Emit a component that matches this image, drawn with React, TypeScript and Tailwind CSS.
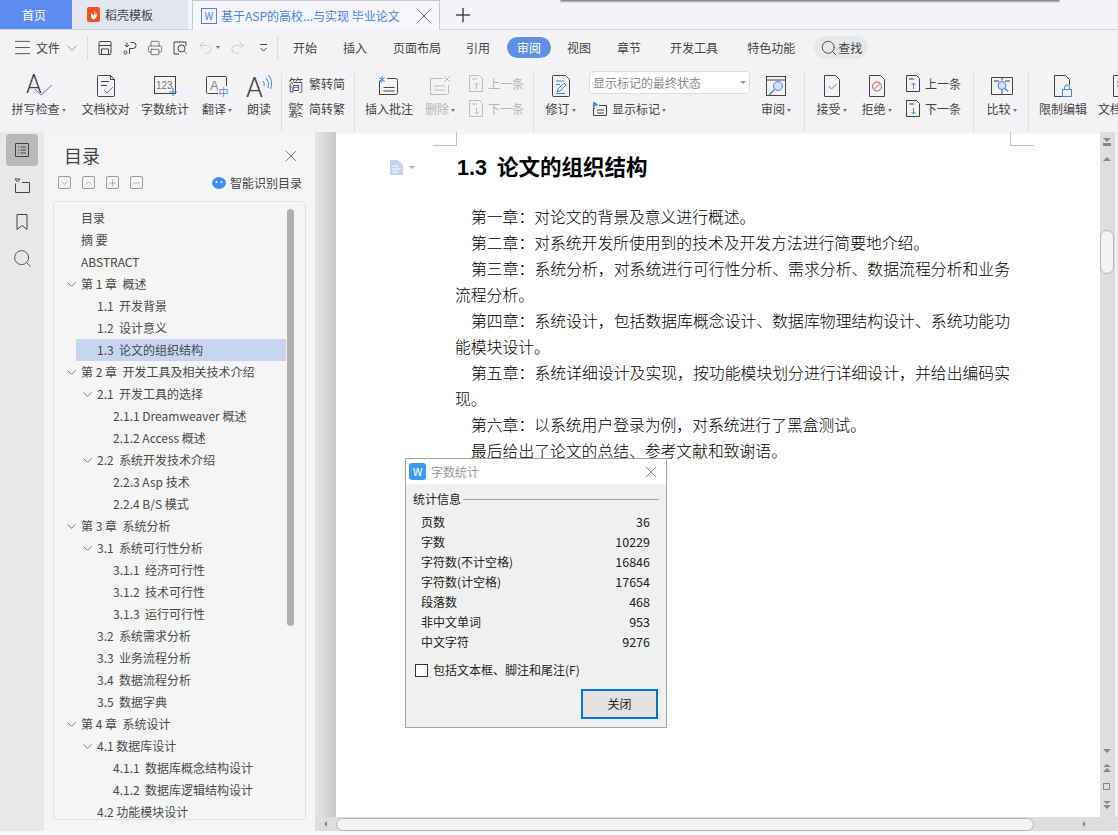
import React from 'react';
import { ChevronDown, ChevronUp, Menu, Minus, Plus, Printer, Redo2, Search, Undo2, X } from 'lucide-react';

const BLUE = '#4a86e8';
const INK = '#444444';
const OFF = '#bdbdbd';

const Svg = ({ w = 24, h = 24, children }: { w?: number; h?: number; children: React.ReactNode }) => (
  <svg className="overflow-visible" width={w} height={h} viewBox={`0 0 ${w} ${h}`} fill="none" strokeWidth="1">
    {children}
  </svg>
);

const Caret = () => <span className="ml-[2px] inline-block h-0 w-0 border-x-[2.5px] border-t-[3px] border-x-transparent border-t-[#777777] align-middle" />;

const RibbonItem = ({ label, caret, off, className, children }: { label: string; caret?: boolean; off?: boolean; className: string; children: React.ReactNode }) => (
  <div className={`flex shrink-0 flex-col items-center ${className}`}>
    <div className="flex h-[30px] items-center justify-center">{children}</div>
    <div className={`h-[16px] whitespace-nowrap text-[12px] leading-[16px] ${off ? 'text-[#b5b5b5]' : 'text-[#444444]'}`}>
      {label}
      {caret && <Caret />}
    </div>
  </div>
);

const Sep = ({ className }: { className: string }) => <div className={`mt-[2px] h-[60px] w-px shrink-0 bg-[#e0e0e0] ${className}`} />;

const SmallRow = ({ icon, label, off }: { icon: React.ReactNode; label: string; off?: boolean }) => (
  <div className={`flex h-[25px] items-center gap-[3px] whitespace-nowrap text-[12px] ${off ? 'text-[#b5b5b5]' : 'text-[#444444]'}`}>
    {icon}
    {label}
  </div>
);

const ConvertIcon = ({ ch }: { ch: string }) => (
  <span className="relative inline-block h-[20px] w-[18px] text-[16px] font-light leading-[20px] text-[#333333]">
    {ch}
    <svg className="absolute bottom-0 left-0" width="6" height="8" viewBox="0 0 6 8" fill="none" stroke={BLUE}>
      <path d="M1 0.5C4 0.5 5 2 4.5 6M2.5 4.5l2 2 1-2" />
    </svg>
  </span>
);

const PageArrow = ({ up, off }: { up?: boolean; off?: boolean }) => {
  const c = off ? OFF : INK;
  return (
    <Svg w={17} h={19}>
      <path d="M1.5 1.5h10l3 3v13h-13z" stroke={c} />
      <path d="M4 5h5" stroke={c} />
      {up ? <path d="M8.5 15V9M6.5 11l2-2 2 2" stroke={off ? OFF : BLUE} /> : <path d="M8.5 9v6M6.5 13l2 2 2-2" stroke={off ? OFF : BLUE} />}
    </Svg>
  );
};

const tree: { t: string; lv: number; open?: boolean; on?: boolean }[] = [
  { t: '目录', lv: 0 },
  { t: '摘 要', lv: 0 },
  { t: 'ABSTRACT', lv: 0 },
  { t: '第 1 章  概述', lv: 0, open: true },
  { t: '1.1  开发背景', lv: 1 },
  { t: '1.2  设计意义', lv: 1 },
  { t: '1.3  论文的组织结构', lv: 1, on: true },
  { t: '第 2 章  开发工具及相关技术介绍', lv: 0, open: true },
  { t: '2.1  开发工具的选择', lv: 1, open: true },
  { t: '2.1.1 Dreamweaver 概述', lv: 2 },
  { t: '2.1.2 Access 概述', lv: 2 },
  { t: '2.2  系统开发技术介绍', lv: 1, open: true },
  { t: '2.2.3 Asp 技术', lv: 2 },
  { t: '2.2.4 B/S 模式', lv: 2 },
  { t: '第 3 章  系统分析', lv: 0, open: true },
  { t: '3.1  系统可行性分析', lv: 1, open: true },
  { t: '3.1.1  经济可行性', lv: 2 },
  { t: '3.1.2  技术可行性', lv: 2 },
  { t: '3.1.3  运行可行性', lv: 2 },
  { t: '3.2  系统需求分析', lv: 1 },
  { t: '3.3  业务流程分析', lv: 1 },
  { t: '3.4  数据流程分析', lv: 1 },
  { t: '3.5  数据字典', lv: 1 },
  { t: '第 4 章  系统设计', lv: 0, open: true },
  { t: '4.1 数据库设计', lv: 1, open: true },
  { t: '4.1.1  数据库概念结构设计', lv: 2 },
  { t: '4.1.2  数据库逻辑结构设计', lv: 2 },
  { t: '4.2 功能模块设计', lv: 1 },
];

const stats = [
  ['页数', '36'],
  ['字数', '10229'],
  ['字符数(不计空格)', '16846'],
  ['字符数(计空格)', '17654'],
  ['段落数', '468'],
  ['非中文单词', '953'],
  ['中文字符', '9276'],
];

const paragraphs = [
  '第一章：对论文的背景及意义进行概述。',
  '第二章：对系统开发所使用到的技术及开发方法进行简要地介绍。',
  '第三章：系统分析，对系统进行可行性分析、需求分析、数据流程分析和业务流程分析。',
  '第四章：系统设计，包括数据库概念设计、数据库物理结构设计、系统功能功能模块设计。',
  '第五章：系统详细设计及实现，按功能模块划分进行详细设计，并给出编码实现。',
  '第六章：以系统用户登录为例，对系统进行了黑盒测试。',
  '最后给出了论文的总结、参考文献和致谢语。',
];

const TreeButton = ({ children }: { children: React.ReactNode }) => (
  <div className="flex h-[13px] w-[13px] items-center justify-center rounded-[2px] border border-[#9a9a9a] text-[#666666]">{children}</div>
);

export default function App() {
  return (
    <div
      className="relative flex h-[835px] w-[1118px] flex-col overflow-hidden bg-[#f3f3f5] text-[#444444]"
      style={{ fontFamily: '"Noto Sans CJK SC", "Noto Sans", sans-serif' }}
    >
      {/* tabs */}
      <div className="flex h-[30px] shrink-0 border-b border-[#d2d4e0] bg-[#f3f4f8] text-[12px]">
        <div className="flex w-[72px] items-center pl-[22px] bg-[#5e8df0] text-white">首页</div>
        <div className="flex w-[116px] items-center gap-[5px] bg-[#e3e6ee] pl-[15px] text-[#444444]">
          <span className="flex h-[15px] w-[13px] items-center justify-center rounded-[2px] bg-[#f4511e]">
            <svg width="9" height="11" viewBox="0 0 9 11" fill="#ffffff">
              <path d="M5.5 0.5C6.5 3 5 5 4.5 6.5 4 5.500 3 5 2.500 4 1.500 6 2 9.500 4 10.500 7 10 8.500 7 7.500 4 7 5 6.500 5.500 6 5.500 6.500 3.500 6.500 2 5.500 0.500z" />
            </svg>
          </span>
          稻壳模板
        </div>
        <div className="ml-[4px] flex h-[30px] w-[248px] items-center border-x border-t border-[#c5c8d6] bg-[#f6f7fa] pl-[8px] text-[#4a86e8]">
          <span className="mr-[4px] flex h-[16px] w-[16px] shrink-0 items-center justify-center border border-[#4a86e8] text-[10px] leading-none">W</span>
          <span className="whitespace-nowrap">基于ASP的高校...与实现 毕业论文</span>
          <X size={22} strokeWidth={1} className="ml-auto mr-[4px] text-[#555555]" />
        </div>
        <Plus size={22} strokeWidth={1.6} className="ml-[12px] mt-[4px] text-[#444444]" />
      </div>
      <div className="absolute left-[560px] top-0 h-[3px] w-[500px] rounded-full bg-gradient-to-b from-[#777777] to-transparent" />

      {/* menu row */}
      <div className="flex h-[35px] shrink-0 items-center text-[12px] text-[#444444]">
        <Menu size={21} strokeWidth={1} className="ml-[12px]" />
        <span className="ml-[3px]">文件</span>
        <ChevronDown size={18} strokeWidth={1} className="ml-[3px] text-[#777777]" />
        <div className="ml-[6px] h-[24px] w-px bg-[#dcdcdc]" />
        <div className="ml-[9px] flex items-center gap-[9px]">
          <Svg w={16} h={16}>
            <path d="M2 2.500a1 1 0 0 1 1-1h10a1 1 0 0 1 1 1v11a1 1 0 0 1-1 1H3a1 1 0 0 1-1-1zM2 5.500h12M4.500 14.500V9h7v5.500" stroke={INK} />
          </Svg>
          <Svg w={16} h={16}>
            <path d="M8.500 2.500h2.500a3 3 0 0 1 0 6H7.500v5.500" stroke={INK} />
            <path d="M3 5l2 2 2-2M5 2.500V7" stroke={INK} />
            <circle cx="3.500" cy="12.500" r="1.500" stroke={INK} />
          </Svg>
          <Printer size={16} strokeWidth={1} />
          <Svg w={16} h={16}>
            <path d="M14 6V2H2v12h5" stroke={INK} />
            <circle cx="9.500" cy="8.500" r="3.500" stroke={INK} />
            <path d="M12 11l3 3" stroke={BLUE} />
          </Svg>
          <span className="flex items-center text-[#bdbdbd]">
            <Undo2 size={17} strokeWidth={1} />
            <Caret />
          </span>
          <Redo2 size={17} strokeWidth={1} className="text-[#bdbdbd]" />
          <span className="ml-[3px] flex">
            <Svg w={11} h={12}>
              <path d="M2 2.500h7M2.500 6l3 3 3-3" stroke={INK} />
            </Svg>
          </span>
        </div>
        <div className="ml-[8px] h-[24px] w-px bg-[#dcdcdc]" />
        <span className="ml-[15px]">开始</span>
        <span className="ml-[26px]">插入</span>
        <span className="ml-[26px]">页面布局</span>
        <span className="ml-[25px]">引用</span>
        <span className="ml-[17px] flex h-[21px] w-[44px] items-center justify-center rounded-full bg-[#5f8fe6] text-white">审阅</span>
        <span className="ml-[16px]">视图</span>
        <span className="ml-[26px]">章节</span>
        <span className="ml-[29px]">开发工具</span>
        <span className="ml-[29px]">特色功能</span>
        <span className="ml-[19px] flex h-[23px] w-[54px] items-center justify-center rounded-full bg-[#e6e8ea]">
          <Search size={18} strokeWidth={1.2} />
          查找
        </span>
      </div>

      {/* ribbon */}
      <div className="flex h-[67px] shrink-0 overflow-hidden pt-[6px]">
        <RibbonItem label="拼写检查" caret className="ml-[12px] w-[53px]">
          <Svg w={28} h={28}>
            <text x="1" y="21" fontSize="25" fontWeight="300" fill={INK} fontFamily="Roboto">A</text>
            <path d="M10 17l6 6L27 13" stroke={BLUE} />
          </Svg>
        </RibbonItem>
        <RibbonItem label="文档校对" className="ml-[16px] w-[49px]">
          <Svg w={20} h={24}>
            <path d="M1.500 2.500a1 1 0 0 1 1-1h12l4 4v16a1 1 0 0 1-1 1h-15a1 1 0 0 1-1-1z" stroke={INK} />
            <path d="M14.500 1.500l4 4h-4zM5 7.500h8M5 11.500h6" stroke={INK} />
            <path d="M8 16l3 3 6-6" stroke={BLUE} />
          </Svg>
        </RibbonItem>
        <RibbonItem label="字数统计" className="ml-[11px] w-[48px]">
          <Svg w={25} h={22}>
            <rect x="1.500" y="1.500" width="21" height="17" stroke={INK} />
            <text x="3" y="14" fontSize="10" fill="#777777" fontFamily="Liberation Sans">123</text>
            <path d="M20 13v8M16 17h8" stroke={BLUE} strokeWidth="1.200" />
          </Svg>
        </RibbonItem>
        <RibbonItem label="翻译" caret className="ml-[12px] w-[32px]">
          <Svg w={24} h={22}>
            <rect x="1.500" y="1.500" width="20" height="17" rx="1" stroke={INK} />
            <text x="5" y="15" fontSize="13" fill="#888888" fontFamily="Liberation Sans">A</text>
            <rect x="13" y="11" width="11" height="11" fill="#f3f3f5" />
            <text x="13.500" y="20.500" fontSize="10" fill={BLUE}>中</text>
          </Svg>
        </RibbonItem>
        <RibbonItem label="朗读" className="ml-[14px] w-[24px]">
          <Svg w={26} h={26}>
            <text x="0" y="24" fontSize="27" fontWeight="300" fill={INK} fontFamily="Roboto">A</text>
            <path d="M17 8q2 2 1 5M20 5q4 4 2 10M22.500 2q5 6 2 14" stroke={BLUE} />
          </Svg>
        </RibbonItem>
        <Sep className="ml-[10px]" />
        <div className="ml-[6px] flex w-[66px] shrink-0 flex-col">
          <SmallRow icon={<ConvertIcon ch="简" />} label="繁转简" />
          <SmallRow icon={<ConvertIcon ch="繁" />} label="简转繁" />
        </div>
        <Sep className="" />
        <RibbonItem label="插入批注" className="ml-[10px] w-[48px]">
          <Svg w={24} h={22}>
            <path d="M4 6H2.500v13.500h16a2 2 0 0 0 2-2V5.500a2 2 0 0 0-2-2H10M6.500 12.500h11M6.500 16h11" stroke={INK} />
            <path d="M5 1v7M2 2.500l6 4M8 2.500l-6 4" stroke={BLUE} />
          </Svg>
        </RibbonItem>
        <RibbonItem label="删除" caret off className="ml-[11px] w-[32px]">
          <Svg w={24} h={22}>
            <path d="M15 3.500H2.500v16h16a2 2 0 0 0 2-2V10M6 11h11M6 15h11M16 1l6 6M22 1l-6 6" stroke={OFF} />
          </Svg>
        </RibbonItem>
        <div className="ml-[12px] flex w-[65px] shrink-0 flex-col">
          <SmallRow icon={<PageArrow up off />} label="上一条" off />
          <SmallRow icon={<PageArrow off />} label="下一条" off />
        </div>
        <Sep className="" />
        <RibbonItem label="修订" caret className="ml-[10px] w-[33px]">
          <Svg w={20} h={24}>
            <path d="M1.500 2.500a1 1 0 0 1 1-1h12l4 4v16a1 1 0 0 1-1 1h-15a1 1 0 0 1-1-1z" stroke={INK} />
            <path d="M5 7h8M5 10.500h4M6 18l1-3 6-6 2 2-6 6zM5 19.500h9" stroke={BLUE} />
          </Svg>
        </RibbonItem>
        <div className="ml-[12px] flex w-[161px] shrink-0 flex-col">
          <div className="flex h-[23px] items-center justify-between rounded-[4px] border border-[#dddddd] bg-white px-[3px] text-[12px] text-[#8a8a8a]">
            显示标记的最终状态
            <span className="h-0 w-0 border-x-[3px] border-t-[3px] border-x-transparent border-t-[#999999]" />
          </div>
          <div className="mt-[2px] flex h-[25px] items-center gap-[4px] pl-[3px] text-[12px]">
            <Svg w={16} h={16}>
              <path d="M3 7H1.500v7.500h13V4.500H7M5 9h7M5 12h7" stroke={INK} />
              <path d="M1.500 1v5l4-2.500z" fill={BLUE} stroke={BLUE} />
            </Svg>
            <span>
              显示标记
              <Caret />
            </span>
          </div>
        </div>
        <RibbonItem label="审阅" caret className="ml-[9px] w-[34px]">
          <Svg w={22} h={22}>
            <rect x="1.500" y="1.500" width="19" height="19" stroke={INK} />
            <path d="M1.500 5h19" stroke={INK} />
            <circle cx="13" cy="11" r="4.500" fill="#cfdff8" stroke={BLUE} />
            <path d="M9.500 14.500L4 20" stroke={BLUE} strokeWidth="1.500" />
          </Svg>
        </RibbonItem>
        <Sep className="ml-[11px]" />
        <RibbonItem label="接受" caret className="ml-[10px] w-[33px]">
          <Svg w={18} h={24}>
            <path d="M1.500 1.500h11l4 4v17h-15z" stroke={INK} />
            <path d="M5.500 12l3 3 5-5" stroke={BLUE} />
          </Svg>
        </RibbonItem>
        <RibbonItem label="拒绝" caret className="ml-[12px] w-[33px]">
          <Svg w={18} h={24}>
            <path d="M1.500 1.500h11l4 4v17h-15z" stroke={INK} />
            <circle cx="9" cy="12.500" r="4.500" stroke="#d9534f" />
            <path d="M6 15.500l6-6" stroke="#d9534f" />
          </Svg>
        </RibbonItem>
        <div className="ml-[12px] flex w-[62px] shrink-0 flex-col">
          <SmallRow icon={<PageArrow up />} label="上一条" />
          <SmallRow icon={<PageArrow />} label="下一条" />
        </div>
        <Sep className="ml-[6px]" />
        <RibbonItem label="比较" caret className="ml-[11px] w-[33px]">
          <Svg w={24} h={22}>
            <path d="M12 2.500H1.500v17h21v-17zM12 2.500v3M12 15v4.500M4 6h5M15 6h5" stroke={INK} />
            <circle cx="12" cy="10.500" r="4" fill="#cfdff8" stroke={BLUE} />
            <path d="M15 13.500l3 3" stroke={BLUE} strokeWidth="1.500" />
          </Svg>
        </RibbonItem>
        <Sep className="ml-[10px]" />
        <RibbonItem label="限制编辑" className="ml-[10px] w-[48px]">
          <Svg w={20} h={24}>
            <path d="M9 22.500H1.500v-21h11l4 4V11" stroke={INK} />
            <rect x="9.500" y="15.500" width="9" height="7" stroke={BLUE} />
            <path d="M11.500 15.500v-2a2.500 2.500 0 0 1 5 0v2" stroke={BLUE} />
          </Svg>
        </RibbonItem>
        <RibbonItem label="文档权限" className="ml-[11px] w-[48px]">
          <Svg w={20} h={24}>
            <path d="M1.500 1.500h11l4 4v17h-15zM5 8h8M5 12h8" stroke={INK} />
          </Svg>
        </RibbonItem>
      </div>

      {/* body */}
      <div className="flex h-[699px] shrink-0">
        <div className="flex w-[44px] shrink-0 flex-col items-center gap-[4px] bg-[#e8e8e8] pt-[2px]">
          <div className="flex h-[32px] w-[32px] items-center justify-center rounded-[4px] bg-[#b9b9b9]">
            <Svg w={14} h={14}>
              <path d="M0.500 0.500h13v13h-13zM3 4h1M5.500 4H11M3 7h1M5.500 7H11M3 10h1M5.500 10H11" stroke={INK} />
            </Svg>
          </div>
          <div className="flex h-[32px] items-center">
            <Svg w={16} h={16}>
              <path d="M1.500 5.500v9h14v-10H8M1 1h5l-2.500 3z" stroke={INK} />
            </Svg>
          </div>
          <div className="flex h-[32px] items-center">
            <Svg w={12} h={16}>
              <path d="M1 0.500h10v15l-5-4-5 4z" stroke={INK} />
            </Svg>
          </div>
          <div className="flex h-[32px] items-center">
            <Search size={21} strokeWidth={1} className="text-[#444444]" />
          </div>
        </div>

        <div className="flex w-[271px] shrink-0 flex-col bg-[#f5f5f5]">
          <div className="flex h-[44px] items-center justify-between pl-[20px] pr-[14px] pt-[3px]">
            <span className="text-[18px] text-[#444444]">目录</span>
            <X size={20} strokeWidth={1} className="text-[#666666]" />
          </div>
          <div className="flex h-[25px] items-start pl-[14px] pr-[13px]">
            <div className="flex gap-[11px]">
              <TreeButton><ChevronDown size={12} strokeWidth={1} /></TreeButton>
              <TreeButton><ChevronUp size={12} strokeWidth={1} /></TreeButton>
              <TreeButton><Plus size={12} strokeWidth={1} /></TreeButton>
              <TreeButton><Minus size={12} strokeWidth={1} /></TreeButton>
            </div>
            <div className="ml-auto flex h-[14px] items-center gap-[4px] text-[12px]">
              <svg width="14" height="12" viewBox="0 0 14 12">
                <ellipse cx="7" cy="6" rx="7" ry="6" fill="#3f8ff0" />
                <circle cx="4.500" cy="5" r="1" fill="#ffffff" />
                <circle cx="9.500" cy="5" r="1" fill="#ffffff" />
              </svg>
              智能识别目录
            </div>
          </div>
          <div className="relative ml-[9px] h-[619px] w-[253px] overflow-hidden rounded-[5px] border border-[#e2e2e2] pt-[5px]">
            {tree.map((r) => (
              <div key={r.t} className={`ml-[22px] flex h-[22px] w-[210px] items-center whitespace-pre text-[12px] text-[#4a4a4a] ${r.on ? 'bg-[#c6d6f0]' : ''}`}>
                <span className={r.lv === 0 ? 'relative ml-[5px]' : r.lv === 1 ? 'relative ml-[21px]' : 'relative ml-[37px]'}>
                  {r.open && <ChevronDown size={15} strokeWidth={1.1} className="absolute left-[-17px] top-[2px] text-[#444444]" />}
                  {r.t}
                </span>
              </div>
            ))}
            <div className="absolute left-[233px] top-[7px] h-[417px] w-[7px] rounded-full bg-[#b0b0b0]" />
          </div>
        </div>

        <div className="flex min-w-0 flex-1 flex-col">
          <div className="flex h-[685px]">
            <div className="w-[21px] shrink-0 bg-gradient-to-r from-[#e6e6e6] to-[#c8c8c8]" />
            <div className="flex-1 overflow-hidden bg-white text-black">
              <div className="flex h-[14px] bg-gradient-to-b from-[#eeeeee] to-white to-[20%]">
                <div className="ml-[97px] w-[24px] border-b border-r border-[#c4c4c4]" />
                <div className="ml-[553px] w-[24px] border-b border-l border-[#c4c4c4]" />
              </div>
              <div className="flex h-[42px] items-center pt-[1px]">
                <svg className="ml-[54px]" width="13" height="15" viewBox="0 0 13 15">
                  <path d="M0 0h8l5 5v10H0z" fill="#c5d5ee" />
                  <path d="M2.500 6h6M2.500 9h8M2.500 12h5" stroke="#ffffff" />
                </svg>
                <span className="ml-[6px] h-0 w-0 border-x-[3px] border-t-[3px] border-x-transparent border-t-[#aaaaaa]" />
                <span className="ml-[42px] whitespace-nowrap text-[21.500px] font-bold">
                  <span className="inline-block w-[40px]" style={{ fontFamily: '"Liberation Sans", sans-serif' }}>1.3</span>论文的组织结构
                </span>
              </div>
              <div className="ml-[119px] mt-[16px] w-[555px] text-justify indent-[16px] text-[15.800px] font-light leading-[26px]">
                {paragraphs.map((p) => (
                  <p key={p}>{p}</p>
                ))}
              </div>
            </div>
            <div className="flex w-[18px] shrink-0 flex-col border-r-[3px] border-[#eeeeee] bg-[#dedede] text-[#888888]">
              <div className="flex h-[20px] items-center pl-[3px]">
                <Svg w={8} h={8}>
                  <path d="M0 0h8L4 4zM0 5h8v3H0z" fill="#888888" />
                </Svg>
              </div>
              <div className="ml-[3px] mt-[5px] h-0 w-0 border-x-[4px] border-b-[4px] border-x-transparent border-b-[#888888]" />
              <div className="mt-[69px] h-[44px] w-[14px] rounded-full border border-[#b4b4b4] bg-[#f3f3f3]" />
              <div className="mt-auto flex flex-col items-start gap-[11px] pb-[8px] pl-[3px]">
                <div className="h-0 w-0 border-x-[4px] border-t-[4px] border-x-transparent border-t-[#888888]" />
                <Svg w={8} h={8}>
                  <path d="M0 3l4-3 4 3zM0 8l4-4 4 4z" fill="#888888" />
                </Svg>
                <div className="h-[7px] w-[7px] border border-[#888888]" />
                <Svg w={8} h={8}>
                  <path d="M0 0h8L4 3zM0 4h8L4 8z" fill="#888888" />
                </Svg>
              </div>
            </div>
          </div>
          <div className="flex h-[14px] items-center bg-[#dedede]">
            <span className="ml-[9px] h-0 w-0 border-y-[3px] border-r-[3px] border-y-transparent border-r-[#888888]" />
            <div className="ml-[9px] h-[13px] w-[698px] rounded-full border border-[#b4b4b4] bg-[#f3f3f3]" />
            <span className="ml-[49px] h-0 w-0 border-y-[3px] border-l-[3px] border-y-transparent border-l-[#888888]" />
          </div>
        </div>
      </div>

      {/* status bar */}
      <div className="flex h-[4px] shrink-0 bg-[#f7f7f7]" />

      {/* word count dialog */}
      <div className="absolute left-[405px] top-[458px] flex h-[270px] w-[262px] flex-col border border-[#a3a3a3] bg-[#f0f0f0] text-[12px] text-[#222222]">
        <div className="flex h-[25px] shrink-0 items-center bg-white pl-[3px] pr-[5px]">
          <span className="flex h-[17px] w-[17px] items-center justify-center rounded-[3px] bg-[#3d9bf0] text-[11px] text-white">W</span>
          <span className="ml-[5px] text-[#999999]">字数统计</span>
          <X size={20} strokeWidth={1} className="ml-auto text-[#777777]" />
        </div>
        <div className="mt-[6px] flex items-center pl-[7px] pr-[7px]">
          <span>统计信息</span>
          <div className="ml-[2px] h-px flex-1 bg-[#a0a0a0]" />
        </div>
        <div className="mt-[4px] flex flex-col pl-[15px] pr-[16px]">
          {stats.map(([k, v]) => (
            <div key={k} className="flex h-[20px] items-center justify-between">
              <span>{k}</span>
              <span className="text-[12.500px]">{v}</span>
            </div>
          ))}
        </div>
        <div className="mt-[9px] flex items-center pl-[9px]">
          <div className="h-[13px] w-[13px] border border-[#333333] bg-white" />
          <span className="ml-[5px]">包括文本框、脚注和尾注(F)</span>
        </div>
        <div className="mt-[10px] flex justify-end pr-[8px]">
          <div className="flex h-[30px] w-[77px] items-center justify-center border-2 border-[#0078d7] bg-[#e1e1e1]">关闭</div>
        </div>
      </div>
    </div>
  );
}
